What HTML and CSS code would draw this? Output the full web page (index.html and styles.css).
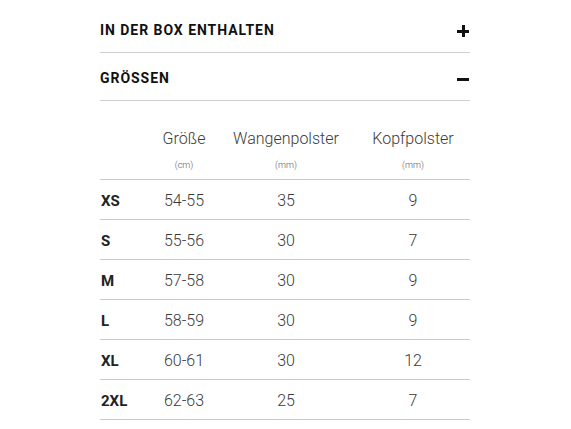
FILE: index.html
```html
<!DOCTYPE html>
<html lang="de">
<head>
<meta charset="utf-8">
<link rel="stylesheet" href="styles.css">
</head>
<body>
<div class="wrap">
  <div class="acc-item">
    <span class="acc-title">IN DER BOX ENTHALTEN</span>
    <span class="icon plus"></span>
  </div>
  <div class="acc-item">
    <span class="acc-title">GRÖSSEN</span>
    <span class="icon minus"></span>
  </div>
  <div class="size-table">
    <div class="row head">
      <div class="cell"></div>
      <div class="cell c"><span class="th">Größe</span><span class="unit">(cm)</span></div>
      <div class="cell c"><span class="th">Wangenpolster</span><span class="unit">(mm)</span></div>
      <div class="cell c k"><span class="th">Kopfpolster</span><span class="unit">(mm)</span></div>
    </div>
    <div class="row"><div class="cell lbl">XS</div><div class="cell c">54-55</div><div class="cell c">35</div><div class="cell c k">9</div></div>
    <div class="row"><div class="cell lbl">S</div><div class="cell c">55-56</div><div class="cell c">30</div><div class="cell c k">7</div></div>
    <div class="row"><div class="cell lbl">M</div><div class="cell c">57-58</div><div class="cell c">30</div><div class="cell c k">9</div></div>
    <div class="row"><div class="cell lbl">L</div><div class="cell c">58-59</div><div class="cell c">30</div><div class="cell c k">9</div></div>
    <div class="row"><div class="cell lbl">XL</div><div class="cell c">60-61</div><div class="cell c">30</div><div class="cell c k">12</div></div>
    <div class="row"><div class="cell lbl">2XL</div><div class="cell c">62-63</div><div class="cell c">25</div><div class="cell c k">7</div></div>
  </div>
</div>
</body>
</html>
```

FILE: styles.css
```css
html, body {
  margin: 0;
  padding: 0;
  background: #fff;
}
body {
  font-family: Roboto, "Liberation Sans", sans-serif;
  color: #111;
}
.wrap {
  width: 370px;
  margin-left: 100px;
  padding-top: 5px;
}
.acc-item {
  display: flex;
  justify-content: space-between;
  align-items: center;
  padding: 18px 0 14px;
  line-height: 15px;
  border-bottom: 1px solid #cfcfcf;
}
.acc-title {
  font-size: 14px;
  font-weight: 700;
  letter-spacing: 0.95px;
  color: #111;
}
.icon {
  position: relative;
  width: 12px;
  height: 12px;
  margin-right: 1px;
}
.icon::before, .plus::after {
  content: "";
  position: absolute;
  background: #111;
}
.icon::before {
  left: 0;
  top: 5px;
  width: 12px;
  height: 3px;
}
.plus::after {
  left: 4.5px;
  top: 0;
  width: 3px;
  height: 12px;
}
.size-table {
  display: flex;
  flex-direction: column;
}
.row {
  display: grid;
  grid-template-columns: 46px 76px 128px 120px;
  box-sizing: border-box;
  height: 40px;
  padding-top: 2px;
  align-items: center;
  border-bottom: 1px solid #c9c9c9;
  font-size: 16px;
  color: #444;
}
.row.head {
  height: auto;
  padding: 28px 0 7px;
  align-items: start;
}
.cell.c {
  text-align: center;
}
.cell.k {
  padding-left: 6px;
}
.th {
  display: block;
  line-height: 20px;
  font-size: 16px;
  font-weight: 300;
  color: #3a3a3a;
}
.row .cell.c {
  font-weight: 300;
  color: #3a3a3a;
}
.unit {
  display: block;
  margin-top: 9px;
  line-height: 14px;
  font-size: 9px;
  color: #555;
}
.lbl {
  font-size: 15px;
  font-weight: 700;
  color: #222;
  padding-left: 1px;
}
```
